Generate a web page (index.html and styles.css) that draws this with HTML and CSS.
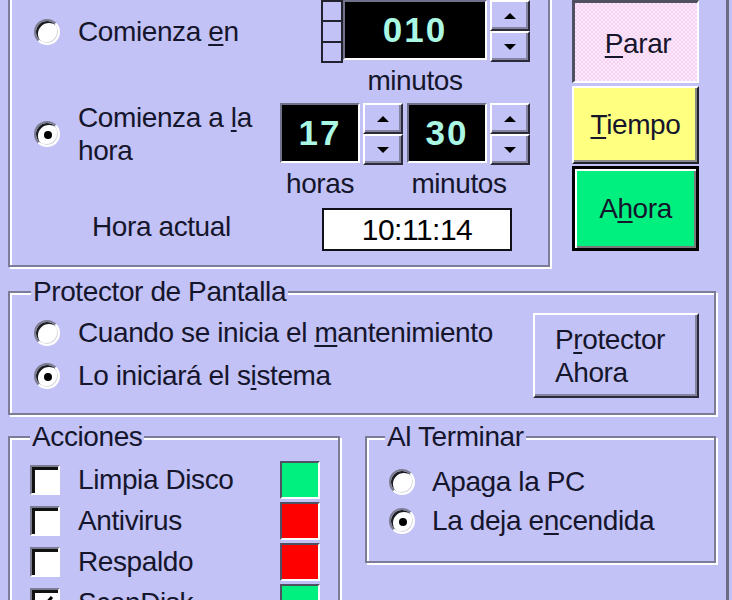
FILE: index.html
```html
<!DOCTYPE html>
<html lang="es">

<head>
    <meta charset="UTF-8">
    <title>Mantenimiento programado</title>
    <link rel="stylesheet" href="styles.css">
</head>

<body>
    <div class="panel">
        <div class="top">
            <!-- start time -->
            <div class="group timer">
                <div class="row row-a">
                    <label class="opt"><span class="radio"></span><span>Comienza <u>e</u>n</span></label>
                    <div class="ticks"><span></span><span></span><span></span></div>
                    <div class="display long">010</div>
                    <div class="spin">
                        <span class="arrow"><svg width="12" height="6" viewBox="0 0 12 6"><path d="M0 6 6 0 12 6z"/></svg></span>
                        <span class="arrow"><svg width="12" height="6" viewBox="0 0 12 6"><path d="M0 0 12 0 6 6z"/></svg></span>
                    </div>
                </div>
                <div class="caps caps-a"><span>minutos</span></div>

                <div class="row row-b">
                    <label class="opt"><span class="radio on"></span><span class="two">Comienza a <u>l</u>a<br>hora</span></label>
                    <div class="display short">17</div>
                    <div class="spin">
                        <span class="arrow"><svg width="12" height="6" viewBox="0 0 12 6"><path d="M0 6 6 0 12 6z"/></svg></span>
                        <span class="arrow"><svg width="12" height="6" viewBox="0 0 12 6"><path d="M0 0 12 0 6 6z"/></svg></span>
                    </div>
                    <div class="display short">30</div>
                    <div class="spin">
                        <span class="arrow"><svg width="12" height="6" viewBox="0 0 12 6"><path d="M0 6 6 0 12 6z"/></svg></span>
                        <span class="arrow"><svg width="12" height="6" viewBox="0 0 12 6"><path d="M0 0 12 0 6 6z"/></svg></span>
                    </div>
                </div>
                <div class="caps caps-b"><span class="cap-h">horas</span><span class="cap-m">minutos</span></div>

                <div class="row row-c">
                    <span class="now-label">Hora actual</span>
                    <div class="clock">10:11:14</div>
                </div>
            </div>

            <div class="actions">
                <div class="key key-stop"><span><u>P</u>arar</span></div>
                <div class="key key-time"><span><u>T</u>iempo</span></div>
                <div class="key key-now"><span>A<u>h</u>ora</span></div>
            </div>
        </div>

        <!-- screen saver -->
        <div class="group saver">
            <span class="legend">Protector de Pantalla</span>
            <div class="choices">
                <label class="opt"><span class="radio"></span><span>Cuando se inicia el <u>m</u>antenimiento</span></label>
                <label class="opt"><span class="radio on"></span><span>Lo iniciará el s<u>i</u>stema</span></label>
            </div>
            <div class="saver-btn">P<u>r</u>otector<br>Ahora</div>
        </div>

        <div class="bottom">
            <div class="group tasks">
                <span class="legend">Acciones</span>
                <div class="task-grid">
                    <span class="check"></span><span>Limpia Disco</span><span class="swatch ok"></span>
                    <span class="check"></span><span>Antivirus</span><span class="swatch bad"></span>
                    <span class="check"></span><span>Respaldo</span><span class="swatch bad"></span>
                    <span class="check"><svg width="22" height="22" viewBox="0 0 22 22"><path d="M4 10l5 5 9-10" fill="none" stroke="#000" stroke-width="3"/></svg></span><span>ScanDisk</span><span class="swatch ok"></span>
                </div>
            </div>

            <div class="group finish">
                <span class="legend">Al Terminar</span>
                <label class="opt"><span class="radio"></span><span>Apaga la PC</span></label>
                <label class="opt"><span class="radio on"></span><span>La deja e<u>n</u>cendida</span></label>
            </div>
        </div>
    </div>
</body>

</html>
```

FILE: styles.css
```css
body {
    margin: 0;
    height: 600px;
    overflow: hidden;
    background: #c2c2f6;
    font-family: "Liberation Sans", Arial, sans-serif;
    font-size: 28px;
    letter-spacing: -0.4px;
    color: #15152c;
}

u {
    text-decoration-thickness: 2px;
    text-underline-offset: 3px;
}

.panel {
    box-sizing: border-box;
    width: 729px;
    height: 600px;
    padding-left: 8px;
    border-right: 3px solid #6c6c86;
    overflow: hidden;
}

/* etched frame */
.group {
    position: relative;
    box-sizing: border-box;
    border: 2px solid #7c7c98;
    box-shadow: inset 2px 2px 0 #fff, 2px 2px 0 #fff;
}

.legend {
    position: absolute;
    top: -17px;
    left: 21px;
    line-height: 32px;
    padding: 0 2px;
    background: #c2c2f6;
    white-space: nowrap;
}

.opt {
    display: flex;
    align-items: center;
    gap: 18px;
    flex: none;
    box-sizing: border-box;
    white-space: nowrap;
}

.radio {
    position: relative;
    flex: none;
    box-sizing: border-box;
    width: 26px;
    height: 26px;
    border-radius: 50%;
    background: #fff;
    border: 2px solid;
    border-color: #7a7a90 #fff #fff #7a7a90;
    box-shadow: inset 2px 2px 0 #1c1c24, inset -1px -1px 0 #d8d8e0;
}

.radio.on::after {
    content: "";
    position: absolute;
    left: 50%;
    top: 50%;
    width: 8px;
    height: 8px;
    margin: -3px 0 0 -3px;
    border-radius: 50%;
    background: #000;
}

/* top block */
.top {
    display: flex;
    align-items: flex-start;
}

.timer {
    width: 542px;
    margin-top: -6px;
    padding: 4px 0 14px;
}

.row {
    display: flex;
    align-items: flex-start;
}

.row-a {
    height: 64px;
}

.row-a .opt {
    width: 311px;
    height: 64px;
    padding-left: 24px;
}

.ticks {
    box-sizing: border-box;
    width: 22px;
    height: 63px;
    display: flex;
    flex-direction: column;
    border: 2px solid #22222e;
}

.ticks span {
    flex: 1;
}

.ticks span + span {
    border-top: 2px solid #22222e;
}

.display {
    box-sizing: border-box;
    height: 60px;
    display: flex;
    align-items: center;
    justify-content: center;
    background: #000;
    color: #aaf8e4;
    font-size: 35px;
    font-weight: bold;
    letter-spacing: 2px;
    border: 2px solid;
    border-color: #70708a #fff #fff #70708a;
}

.display.long {
    width: 144px;
}

.display.short {
    width: 80px;
}

.spin + .display {
    margin-left: 4px;
}

.spin {
    margin-left: 3px;
    width: 40px;
    display: flex;
    flex-direction: column;
}

.arrow {
    box-sizing: border-box;
    height: 31px;
    display: flex;
    align-items: center;
    justify-content: center;
    border: 2px solid;
    border-color: #fff #2a2a3a #2a2a3a #fff;
    box-shadow: inset -2px -2px 0 #8484a0;
}

.arrow svg {
    fill: #000;
}

.caps {
    display: flex;
    white-space: nowrap;
}

.caps-a {
    height: 34px;
    line-height: 34px;
    padding-left: 333px;
}

.caps-a span {
    width: 144px;
    text-align: center;
}

.row-b {
    margin-top: 5px;
    height: 62px;
}

.row-b .opt {
    width: 270px;
    height: 62px;
    padding-left: 24px;
}

.two {
    line-height: 33px;
}

.caps-b {
    height: 38px;
    line-height: 38px;
}

.cap-h {
    margin-left: 270px;
    width: 80px;
    text-align: center;
}

.cap-m {
    margin-left: 47px;
    width: 104px;
    text-align: center;
}

.row-c {
    margin-top: 5px;
    height: 43px;
    align-items: center;
}

.now-label {
    box-sizing: border-box;
    width: 312px;
    padding-left: 82px;
    margin-top: -6px;
}

.clock {
    box-sizing: border-box;
    width: 190px;
    height: 43px;
    display: flex;
    align-items: center;
    justify-content: center;
    background: #fff;
    border: 2px solid #101018;
    color: #000;
    font-size: 30px;
    letter-spacing: -0.5px;
}

/* command buttons */
.actions {
    margin-left: 22px;
    width: 127px;
    display: flex;
    flex-direction: column;
}

.key {
    box-sizing: border-box;
    display: flex;
    align-items: center;
    justify-content: center;
}

.key-stop {
    height: 83px;
    border-style: solid;
    border-width: 3px 2px 2px 3px;
    border-color: #505060 #fff #fff #505060;
    background-color: #f6d2f2;
    background-image: repeating-conic-gradient(#fde9fb 0 25%, transparent 0 50%);
    background-size: 4px 4px;
}

.key-stop span {
    margin: 4px 0 0 4px;
}

.key-time {
    margin-top: 3px;
    height: 78px;
    background: #ffff80;
    border: 2px solid;
    border-color: #fff #23232e #23232e #fff;
    box-shadow: inset -2px -2px 0 #8a8a8a;
}

.key-now {
    margin-top: 2px;
    height: 85px;
    background: #00f080;
    border: 3px solid #000;
    box-shadow: inset 2px 2px 0 #fff, inset -2px -2px 0 #7a7a7a;
}

/* screen saver */
.saver {
    margin-top: 24px;
    width: 708px;
    padding: 18px 15px 15px 24px;
    display: flex;
    justify-content: space-between;
    align-items: flex-start;
}

.choices .opt {
    height: 43px;
}

.saver-btn {
    box-sizing: border-box;
    margin-top: 2px;
    width: 166px;
    height: 85px;
    padding: 8px 0 0 20px;
    line-height: 33px;
    border: 2px solid;
    border-color: #fff #2a2a3a #2a2a3a #fff;
    box-shadow: inset -2px -2px 0 #8484a0;
}

/* bottom block */
.bottom {
    display: flex;
    align-items: flex-start;
    margin-top: 21px;
}

.tasks {
    width: 332px;
    height: 220px;
    padding: 23px 0 0 20px;
}

.tasks .legend {
    left: 20px;
}

.task-grid {
    display: grid;
    grid-template-columns: 30px 184px 40px;
    grid-auto-rows: 38px;
    column-gap: 18px;
    row-gap: 3px;
    align-items: center;
    white-space: nowrap;
}

.check {
    box-sizing: border-box;
    width: 30px;
    height: 30px;
    display: flex;
    align-items: center;
    justify-content: center;
    background: #fff;
    border: 2px solid;
    border-color: #7a7a90 #fff #fff #7a7a90;
    box-shadow: inset 3px 3px 0 #111;
}

.swatch {
    box-sizing: border-box;
    align-self: stretch;
    border: 2px solid;
    border-color: #505060 #fff #fff #505060;
}

.swatch.ok {
    background: #00f080;
}

.swatch.bad {
    background: #ff0000;
}

.finish {
    margin-left: 25px;
    width: 351px;
    height: 127px;
    padding: 24px 0 0 22px;
}

.finish .legend {
    left: 18px;
}

.finish .opt {
    height: 39px;
    gap: 17px;
}
```
